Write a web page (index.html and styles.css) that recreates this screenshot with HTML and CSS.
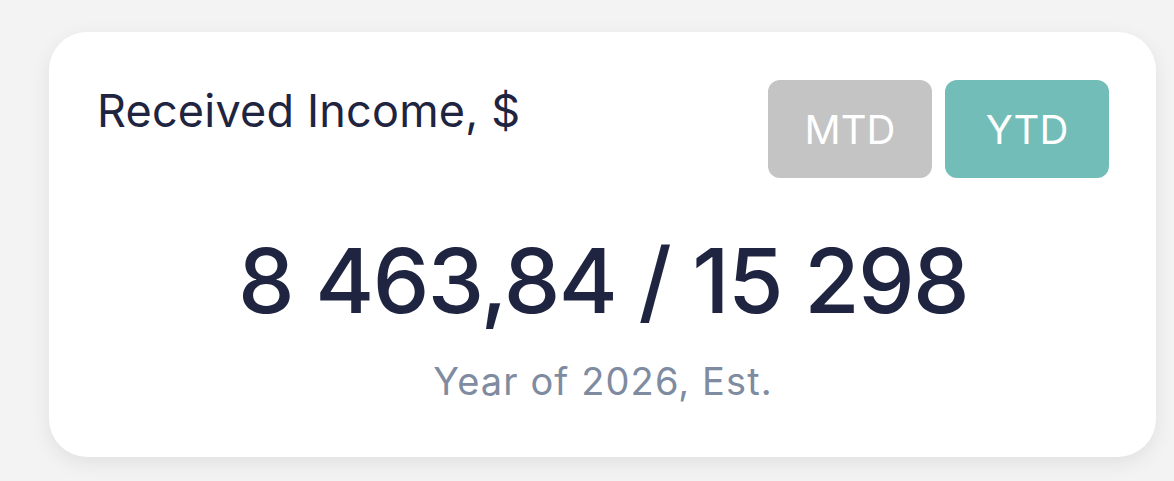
FILE: index.html
```html
<!DOCTYPE html>
<html>
<head>
<meta charset="utf-8">
<link rel="stylesheet" href="styles.css">
</head>
<body>
<div class="card">
  <div class="top">
    <div class="title">Received Income, $</div>
    <div class="toggles">
      <button class="tg tg-off">MTD</button>
      <button class="tg tg-on">YTD</button>
    </div>
  </div>
  <div class="value">8 463,84 / 15 298</div>
  <div class="sub">Year of 2026, Est.</div>
</div>
</body>
</html>
```
FILE: styles.css
```css
html, body {
  margin: 0;
  padding: 0;
  background: #f3f3f3;
  font-family: Inter, "Noto Sans", sans-serif;
}
body {
  padding: 32px 18px 24px 49px;
}
.card {
  width: 1107px;
  height: 425px;
  box-sizing: border-box;
  background: #ffffff;
  border-radius: 38px;
  box-shadow: 0 6px 20px rgba(0, 0, 0, 0.08);
  padding: 48px 47px 0 48px;
  display: flex;
  flex-direction: column;
}
.top {
  display: flex;
  justify-content: space-between;
  align-items: flex-start;
}
.title {
  font-size: 45px;
  color: #1f2440;
  line-height: 1;
  margin-top: 8px;
  letter-spacing: 0.2px;
}
.toggles {
  display: flex;
  gap: 13px;
}
.tg {
  width: 164px;
  height: 98px;
  border: none;
  border-radius: 12px;
  color: #ffffff;
  font-family: Inter, "Noto Sans", sans-serif;
  font-size: 40px;
  padding: 0;
}
.tg-off { background: #c4c4c4; }
.tg-on { background: #72bdb8; }
.value {
  text-align: center;
  font-size: 90px;
  font-weight: 500;
  color: #1f2440;
  line-height: 1;
  margin-top: 58px;
  letter-spacing: -1.7px;
}
.sub {
  text-align: center;
  font-size: 38px;
  color: #7f8ba0;
  line-height: 1;
  margin-top: 36px;
  letter-spacing: 1.1px;
}
```
